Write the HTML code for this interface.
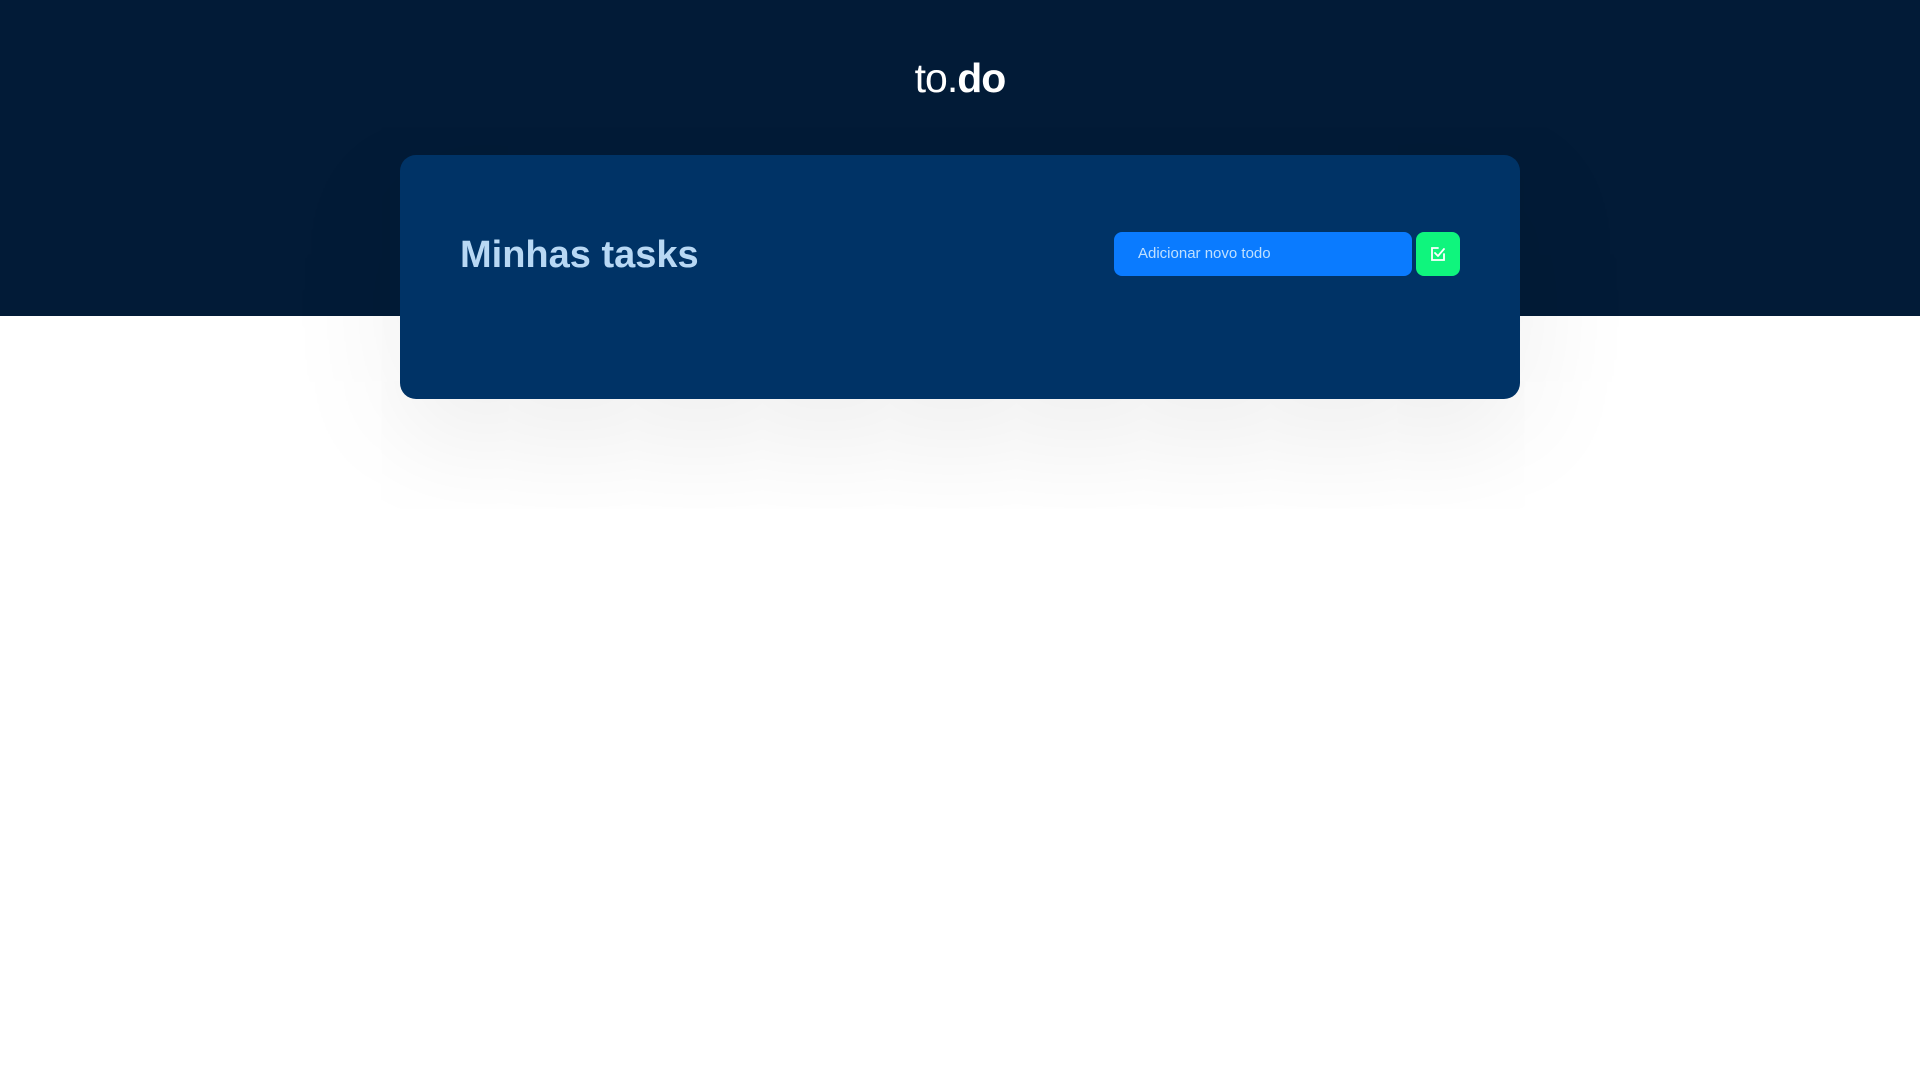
<!DOCTYPE html>
<html><head><style>
body{margin:0;width:1920px;height:1080px;background:#fff;font-family:"Liberation Sans",sans-serif;position:relative;overflow:hidden}
.hdr{position:absolute;left:0;top:0;width:1920px;height:316px;background:#021b37}
.logo{position:absolute;left:0;width:1920px;top:55px;text-align:center;color:#fff;font-size:41px;letter-spacing:-1px}
.logo b{font-weight:bold}
.card{position:absolute;left:400px;top:155px;width:1120px;height:244px;background:#003366;border-radius:16px;box-shadow:0 30px 120px rgba(0,0,0,0.09)}
.title{position:absolute;left:460px;top:234px;font-size:38px;font-weight:bold;color:#b8d8f4}
.inp{position:absolute;left:1114px;top:232px;width:298px;height:44px;background:#0a7bff;border-radius:8px;color:#bfe0ff;font-size:15px;line-height:44px;box-sizing:border-box;padding-left:24px}
.btn{position:absolute;left:1416px;top:232px;width:44px;height:44px;background:#0ff57d;border-radius:8px}
</style></head><body>
<div class="hdr"></div>
<div class="logo">to.<b>do</b></div>
<div class="card"></div>
<div class="title">Minhas tasks</div>
<div class="inp">Adicionar novo todo</div>
<div class="btn"><svg width="44" height="44" viewBox="0 0 44 44"><path d="M22 16h-6v12h12v-6" fill="none" stroke="#fff" stroke-width="1.8" stroke-linecap="round"/><path d="M19 21l3 3 6-7" fill="none" stroke="#fff" stroke-width="1.8" stroke-linecap="round" stroke-linejoin="round"/></svg></div>
</body></html>
